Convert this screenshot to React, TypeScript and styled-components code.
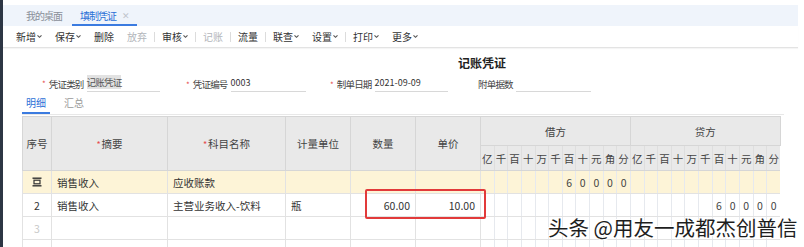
import React from 'react';
import styled, { createGlobalStyle } from 'styled-components';

const GlobalStyle = createGlobalStyle`
  html, body {
    margin: 0;
    padding: 0;
    background: #ffffff;
    font-family: "Noto Sans CJK SC", "Noto Sans", "Liberation Sans", sans-serif;
    font-size: 12px;
    color: #333;
  }
`;

const Page = styled.div`
  display: flex;
  width: 804px;
  height: 247px;
  overflow: hidden;
  background: #fff;
`;

const SideStrip = styled.div`
  width: 3px;
  flex: none;
  background: #2d3644;
`;

const Main = styled.div`
  flex: 1;
  display: flex;
  flex-direction: column;
  padding-top: 5px;
  padding-right: 6px;
  position: relative;

  & > * {
    flex-shrink: 0;
  }
`;

const TabBar = styled.div`
  height: 21px;
  background: #eff4fb;
  display: flex;
  align-items: stretch;
  padding-left: 23px;
  gap: 10px;
`;

const PageTab = styled.div<{ $active?: boolean }>`
  display: flex;
  align-items: center;
  gap: 6px;
  padding: 2px ${p => (p.$active ? '8px' : '0')} 0;
  font-size: 10px;
  letter-spacing: -1px;
  color: ${p => (p.$active ? '#2b6fd6' : '#8a8f99')};
  border-bottom: 2px solid ${p => (p.$active ? '#3b7be0' : 'transparent')};
`;

const Close = styled.span`
  color: #c0c4cc;
  font-size: 9px;
`;

const Toolbar = styled.div`
  height: 21px;
  display: flex;
  align-items: center;
  padding-left: 13px;
  border-bottom: 1px solid #e3e3e3;
  box-shadow: 0 1px 1px rgba(0, 0, 0, 0.04);
`;

const ToolItem = styled.div<{ $disabled?: boolean }>`
  display: flex;
  align-items: center;
  gap: 1px;
  font-size: 10px;
  color: ${p => (p.$disabled ? '#b3b6bb' : '#333')};
  margin-right: 13px;
`;

const ToolSep = styled.div`
  width: 1px;
  height: 10px;
  background: #dcdcdc;
  margin: 0 7px 0 -6px;
`;

const Title = styled.div`
  text-align: center;
  font-size: 12px;
  font-weight: bold;
  color: #222;
  margin-top: 6px;
  padding-left: 163px;
  height: 18px;
  line-height: 18px;
`;

const FormRow = styled.div`
  display: flex;
  align-items: flex-end;
  height: 18px;
  margin-top: 2px;
  padding-left: 39px;
`;

const Field = styled.div<{ $w: number }>`
  display: flex;
  align-items: center;
  width: ${p => p.$w}px;
  font-size: 9.5px;
  color: #444;
`;

const Star = styled.span`
  color: #e64b4b;
  margin-right: 3px;
  font-size: 8px;
`;

const HeadStar = styled.span`
  color: #e64b4b;
  font-size: 9px;
  margin-right: 1px;
`;

const Label = styled.span`
  margin-right: 3px;
  letter-spacing: -0.8px;
  white-space: nowrap;
`;

const Value = styled.div<{ $w: number }>`
  width: ${p => p.$w}px;
  border-bottom: 1px solid #d8d8d8;
  padding-bottom: 2px;
  color: #333;
  font-size: 9px;
  white-space: nowrap;
`;

const Selected = styled.span`
  background: #e2e2e2;
  color: #555;
  letter-spacing: -0.8px;
  font-size: 9.5px;
`;

const DetailTabs = styled.div`
  display: flex;
  height: 21px;
  margin: 1px 14px 0 19px;
  border-bottom: 1px solid #e8e8e8;
`;

const DetailTab = styled.div<{ $active?: boolean }>`
  display: flex;
  align-items: center;
  padding: 0 4px;
  margin-right: 10px;
  font-size: 10px;
  color: ${p => (p.$active ? '#2b6fd6' : '#9a9a9a')};
  border-bottom: 2px solid ${p => (p.$active ? '#3b7be0' : 'transparent')};
`;

const TableWrap = styled.div`
  position: relative;
  margin: 1px 0 0 19px;
  width: 758px;
`;

const Grid = styled.table`
  border-collapse: collapse;
  table-layout: fixed;
  width: 758px;
  font-size: 10.5px;
`;

const HeadCell = styled.th<{ $h?: number }>`
  background: #e9e9e9;
  border: 1px solid #d6d6d6;
  font-weight: normal;
  color: #444;
  height: ${p => p.$h ?? 24}px;
  padding: 0;
  text-align: center;
`;

const DigitHead = styled.th`
  background: #e9e9e9;
  border-left: 1px solid #dedede;
  border-bottom: 1px solid #d6d6d6;
  font-weight: normal;
  color: #444;
  font-size: 10.5px;
  padding: 0;
  height: 24px;
  text-align: center;
`;

const Row = styled.tr<{ $hl?: boolean }>`
  background: ${p => (p.$hl ? '#fdf4d7' : '#fff')};
`;

const Cell = styled.td<{ $align?: string; $muted?: boolean }>`
  border: 1px solid #e2e2e2;
  height: 22px;
  padding: 0 5px;
  text-align: ${p => p.$align ?? 'left'};
  color: ${p => (p.$muted ? '#c8c8c8' : '#333')};
  white-space: nowrap;
  overflow: hidden;
`;

const DigitCell = styled.td`
  border-left: 1px solid #e6e9ee;
  border-bottom: 1px solid #e2e2e2;
  padding: 0;
  text-align: center;
  color: #444;
  font-size: 10.5px;
`;

const RedBox = styled.div`
  position: absolute;
  left: 343px;
  top: 73px;
  width: 117px;
  height: 26px;
  border: 2px solid #e23a3a;
  border-radius: 2px;
  pointer-events: none;
`;

const Watermark = styled.div`
  position: absolute;
  left: 545px;
  top: 215px;
  font-size: 20.5px;
  line-height: 24px;
  color: #1e1e1e;
  white-space: nowrap;
  text-shadow: 0 0 2px #fff, 0 0 2px #fff, 1px 1px 0 #fff, -1px -1px 0 #fff;
`;

const Chevron = () => (
  <svg width="5" height="5" viewBox="0 0 5 5">
    <path d="M0.5 1.3 L2.5 3.3 L4.5 1.3" fill="none" stroke="#555" strokeWidth="1.1" />
  </svg>
);

const InsertIcon = () => (
  <svg width="10" height="10" viewBox="0 0 10 10">
    <rect x="0.5" y="0.5" width="9" height="1.4" fill="#333" />
    <rect x="0.5" y="8.1" width="9" height="1.4" fill="#333" />
    <rect x="2" y="3.2" width="6" height="3.6" fill="none" stroke="#333" strokeWidth="1.2" />
  </svg>
);

const tools: { label: string; drop?: boolean; disabled?: boolean; sep?: boolean }[] = [
  { label: '新增', drop: true },
  { label: '保存', drop: true },
  { label: '删除' },
  { label: '放弃', disabled: true, sep: true },
  { label: '审核', drop: true, sep: true },
  { label: '记账', disabled: true, sep: true },
  { label: '流量', sep: true },
  { label: '联查', drop: true },
  { label: '设置', drop: true, sep: true },
  { label: '打印', drop: true },
  { label: '更多', drop: true },
];

const units = ['亿', '千', '百', '十', '万', '千', '百', '十', '元', '角', '分'];

const digits = (amount: string | null) => {
  const arr: string[] = Array(11).fill('');
  if (amount) {
    const s = amount.split('');
    for (let i = 0; i < s.length; i++) arr[11 - s.length + i] = s[i];
  }
  return arr;
};

const rows = [
  { seq: 'icon', summary: '销售收入', subject: '应收账款', unit: '', qty: '', price: '', debit: '60000', credit: null, hl: true },
  { seq: '2', summary: '销售收入', subject: '主营业务收入-饮料', unit: '瓶', qty: '60.00', price: '10.00', debit: null, credit: '60000' },
  { seq: '3', summary: '', subject: '', unit: '', qty: '', price: '', debit: null, credit: null },
  { seq: '', summary: '', subject: '', unit: '', qty: '', price: '', debit: null, credit: null },
];

export default function App() {
  return (
    <Page>
      <GlobalStyle />
      <SideStrip />
      <Main>
        <TabBar>
          <PageTab>我的桌面</PageTab>
          <PageTab $active>
            填制凭证 <Close>✕</Close>
          </PageTab>
        </TabBar>
        <Toolbar>
          {tools.map((t, i) => (
            <React.Fragment key={i}>
              <ToolItem $disabled={t.disabled}>
                {t.label}
                {t.drop && <Chevron />}
              </ToolItem>
              {t.sep && <ToolSep />}
            </React.Fragment>
          ))}
        </Toolbar>
        <Title>记账凭证</Title>
        <FormRow>
          <Field $w={144}>
            <Star>*</Star>
            <Label>凭证类别</Label>
            <Value $w={73}>
              <Selected>记账凭证</Selected>
            </Value>
          </Field>
          <Field $w={144}>
            <Star>*</Star>
            <Label>凭证编号</Label>
            <Value $w={75}>0003</Value>
          </Field>
          <Field $w={148}>
            <Star>*</Star>
            <Label>制单日期</Label>
            <Value $w={73}>2021-09-09</Value>
          </Field>
          <Field $w={130}>
            <Label>附单据数</Label>
            <Value $w={75}>&nbsp;</Value>
          </Field>
        </FormRow>
        <DetailTabs>
          <DetailTab $active>明细</DetailTab>
          <DetailTab>汇总</DetailTab>
        </DetailTabs>
        <TableWrap>
          <Grid>
            <colgroup>
              <col style={{ width: 29 }} />
              <col style={{ width: 116 }} />
              <col style={{ width: 118 }} />
              <col style={{ width: 65 }} />
              <col style={{ width: 65 }} />
              <col style={{ width: 65 }} />
              {Array.from({ length: 22 }).map((_, i) => (
                <col key={i} style={{ width: 300 / 22 }} />
              ))}
            </colgroup>
            <thead>
              <tr>
                <HeadCell rowSpan={2} $h={28}>序号</HeadCell>
                <HeadCell rowSpan={2}>
                  <HeadStar>*</HeadStar>摘要
                </HeadCell>
                <HeadCell rowSpan={2}>
                  <HeadStar>*</HeadStar>科目名称
                </HeadCell>
                <HeadCell rowSpan={2}>计量单位</HeadCell>
                <HeadCell rowSpan={2}>数量</HeadCell>
                <HeadCell rowSpan={2}>单价</HeadCell>
                <HeadCell colSpan={11} $h={28}>借方</HeadCell>
                <HeadCell colSpan={11} $h={28}>贷方</HeadCell>
              </tr>
              <tr>
                {[...units, ...units].map((u, i) => (
                  <DigitHead key={i}>{u}</DigitHead>
                ))}
              </tr>
            </thead>
            <tbody>
              {rows.map((r, i) => (
                <Row key={i} $hl={r.hl}>
                  <Cell $align="center" $muted={r.seq === '3'}>
                    {r.seq === 'icon' ? <InsertIcon /> : r.seq}
                  </Cell>
                  <Cell>{r.summary}</Cell>
                  <Cell>{r.subject}</Cell>
                  <Cell>{r.unit}</Cell>
                  <Cell $align="right">{r.qty}</Cell>
                  <Cell $align="right">{r.price}</Cell>
                  {[...digits(r.debit), ...digits(r.credit)].map((d, j) => (
                    <DigitCell key={j}>{d}</DigitCell>
                  ))}
                </Row>
              ))}
            </tbody>
          </Grid>
          <RedBox />
        </TableWrap>
        <Watermark>头条 @用友一成都杰创普信</Watermark>
      </Main>
    </Page>
  );
}
